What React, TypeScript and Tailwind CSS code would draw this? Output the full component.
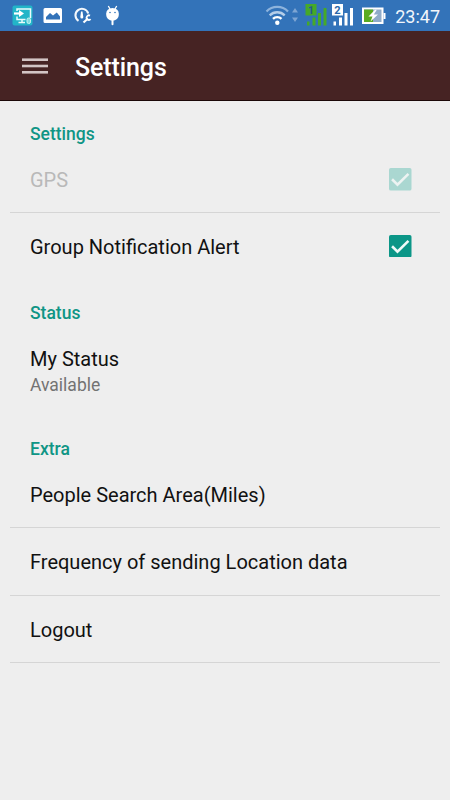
import clsx from 'clsx';
import React from 'react';

const StatusBar: React.FC = () => (
  <div className="flex h-[31px] items-center bg-[#3373b9] text-white">
    {/* Notifications */}
    <svg width="130" height="31" viewBox="0 0 130 31" fill="none">
      {/* Screen share */}
      <rect x="12.5" y="5.5" width="20" height="20" rx="2" fill="#22b5c8" />
      <path d="M17 11V9h13.500v9M17 16.500v3h8.500" stroke="#e9fbfb" strokeWidth="1.500" />
      <path d="M14 13.500h6" stroke="#fff" strokeWidth="2.200" />
      <path d="M19 10l5 3.500-5 3.500z" fill="#fff" />
      <path d="M18.500 22.500h6.500M22 19.500v3" stroke="#e9fbfb" strokeWidth="1.500" />
      <rect x="27" y="18" width="3.500" height="5.500" rx="1.600" fill="#7fdbe0" stroke="#c9f3f2" />

      {/* Picture */}
      <path
        fillRule="evenodd"
        d="M45 8h15.500a1.500 1.500 0 0 1 1.500 1.500v12a1.500 1.500 0 0 1-1.500 1.500H45a1.500 1.500 0 0 1-1.500-1.500v-12A1.500 1.500 0 0 1 45 8zM46 19.500h14v-3l-3.200-4-3.800 3-3-2.500-4 4z"
        fill="#fff"
      />

      {/* Gauge with wrench */}
      <path d="M78.500 20.800A6.500 6.500 0 1 1 88.200 13.500" stroke="#f4f8fc" strokeWidth="2.100" />
      <path d="M81 11.500h1.500l.8 5.500a1.500 1.500 0 1 1-3 0z" fill="#fff" />
      <path d="M83.500 22.500l4.500-4" stroke="#fff" strokeWidth="2.200" />
      <path d="M90 15.600a2.300 2.300 0 1 0 .6 3.600" stroke="#fff" strokeWidth="1.800" />

      {/* Android robot */}
      <path d="M108.300 6l2 3.500M116.700 6l-2 3.500" stroke="#fff" strokeWidth="1.300" />
      <path d="M106.200 13.500a6.300 5.500 0 0 1 12.600 0v1.500a6.300 5.700 0 0 1-12.600 0z" fill="#fff" />
      <path d="M112.500 19v5.300" stroke="#fff" strokeWidth="2" strokeLinecap="round" />
      <circle cx="110" cy="12.500" r=".8" fill="#3373b9" />
      <circle cx="115" cy="12.500" r=".8" fill="#3373b9" />
    </svg>

    {/* Wifi, signal and battery */}
    <svg className="ml-auto" width="135" height="31" viewBox="260 0 135 31" fill="none">
      <path d="M266.500 11.500a15 15 0 0 1 21.500 0" stroke="#8db3dc" strokeWidth="2.200" />
      <path d="M269.700 15.300a10.800 10.800 0 0 1 15 0" stroke="#b5cee9" strokeWidth="2.300" />
      <path d="M273 18.900a6 6 0 0 1 8.500 0" stroke="#fff" strokeWidth="2.400" />
      <circle cx="277.300" cy="22.800" r="2.200" fill="#fff" />
      <path d="M292 12.500l3-4.500 3 4.500zM292 17.500l3 4.500 3-4.500z" fill="#7da5d3" />

      <rect x="305.500" y="4" width="11" height="11.500" fill="#46a928" />
      <path d="M307 21.500h2.500v4H307zM312.500 17.500h3v8h-3zM318 13h3v12.500h-3zM323.500 8h3v17.500h-3z" fill="#46a928" />
      <text x="311" y="13.500" textAnchor="middle" fill="#245b93" className="font-['Roboto'] text-[11px] font-bold">
        1
      </text>

      <rect x="332" y="4" width="11" height="11.500" fill="#fff" />
      <path d="M333.500 21.500h2.500v4h-2.500zM339 17.500h3v8h-3zM344.500 13h3v12.500h-3zM350 8h3v17.500h-3z" fill="#fff" />
      <text x="337.500" y="13.500" textAnchor="middle" fill="#2b68aa" className="font-['Roboto'] text-[11px] font-bold">
        2
      </text>

      <rect x="363" y="8.500" width="19.500" height="14.500" fill="#8fabc9" stroke="#fff" strokeWidth="2" />
      <path d="M364 9.500h9v12.500h-9z" fill="#5aab22" />
      <path d="M383.500 13h2v6h-2z" fill="#fff" />
      <path d="M375 9.800l-6.500 6.700h4l-2 5 7.500-7h-4.200l3-4.700z" fill="#fff" />
    </svg>
    <span className="mr-2.5 text-[18px] leading-none translate-y-px text-[#f1f6fb] w-[45px] text-right whitespace-nowrap">23:47</span>
  </div>
);

const Header: React.FC = () => (
  <header className="flex h-[70px] items-center border-b border-[#1b0808] bg-[#462323] pl-[22px]">
    <svg className="mt-px" width="26" height="16" viewBox="0 0 26 16" fill="#d2c4c4">
      <rect y=".4" width="26" height="2.600" />
      <rect y="6.700" width="26" height="2.600" />
      <rect y="13" width="26" height="2.600" />
    </svg>
    <h1 className="ml-[27px] pt-1 text-[25px] font-medium leading-8 tracking-[-0.1px] text-white">Settings</h1>
  </header>
);

const Category: React.FC<{ title: string }> = ({ title }) => (
  <h2 className="h-[46px] px-[30px] pt-5 text-[17.5px] font-medium leading-[26px] text-[#0f9585]">{title}</h2>
);

interface RowProps {
  title: string;
  height?: string;
  checked?: boolean;
  disabled?: boolean;
  divider?: boolean;
}

const Row: React.FC<RowProps> = ({ title, height = 'h-[67px]', checked, disabled, divider }) => (
  <div
    className={clsx(
      'mx-2.5 flex items-center justify-between border-b pl-5 pr-[28.5px]',
      height,
      divider ? 'border-[#d5d5d5]' : 'border-transparent',
    )}
  >
    <span className={clsx('pt-px text-xl leading-7', disabled ? 'text-[#b9b9b9]' : 'text-[#111]')}>{title}</span>
    {checked && (
      <svg width="22.5" height="22.5" viewBox="0 0 22 22" fill="none">
        <rect width="22" height="22" rx="1.8" fill={disabled ? '#aad7d1' : '#0b9687'} />
        <path d="M3 11l5.300 5.300L19 5.700" stroke={disabled ? '#edf3f2' : '#eefaf8'} strokeWidth="2.500" />
      </svg>
    )}
  </div>
);

const App: React.FC = () => (
  <div className="h-[800px] w-[450px] overflow-hidden bg-[#eeeeee] font-['Roboto',sans-serif]">
    <StatusBar />
    <Header />
    <main>
      <Category title="Settings" />
      <Row title="GPS" height="h-[66px]" checked disabled divider />
      <Row title="Group Notification Alert" checked />

      <Category title="Status" />
      <div className="flex h-[90px] flex-col justify-center px-[30px]">
        <span className="text-xl leading-7 text-[#111]">My Status</span>
        <span className="text-[17.5px] leading-6 text-[#737373]">Available</span>
      </div>

      <Category title="Extra" />
      <Row title="People Search Area(Miles)" height="h-[66px]" divider />
      <Row title="Frequency of sending Location data" height="h-[68px]" divider />
      <Row title="Logout" divider />
    </main>
  </div>
);

export default App;
